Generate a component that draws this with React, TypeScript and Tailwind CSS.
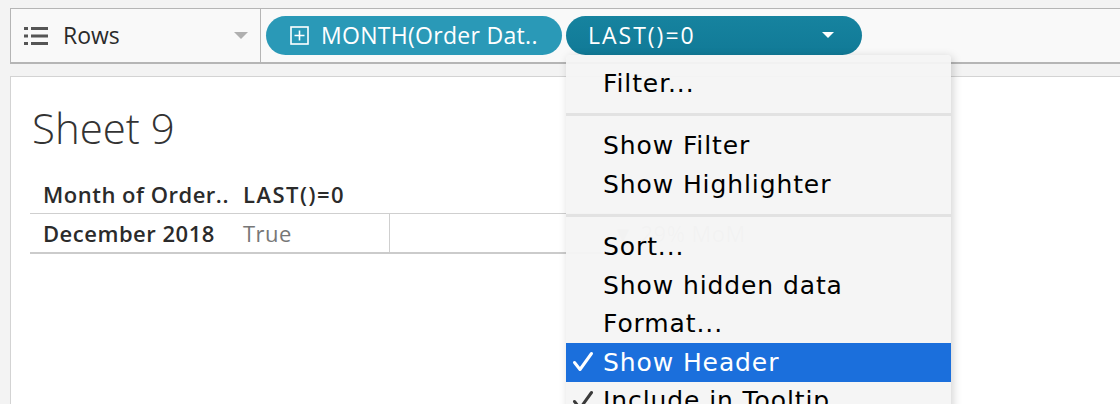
import React from "react";

const Check = ({ color }: { color: string }) => (
  <svg width="22" height="22" viewBox="0 0 22 22" className="absolute left-[6px] top-1/2 -translate-y-1/2">
    <path d="M2.5 11.5 L8 18.5 L19.5 2.5" fill="none" stroke={color} strokeWidth="3" strokeLinecap="round" strokeLinejoin="round" />
  </svg>
);

const MenuItem = ({ label, checked, active }: { label: string; checked?: boolean; active?: boolean }) => (
  <div
    className={`relative h-[38.5px] flex items-center pl-[37px] text-[25px] tracking-[0.9px] ${
      active ? "bg-[#1b6fdc] text-white" : "text-black"
    }`}
  >
    {checked && <Check color={active ? "#ffffff" : "#3a3a3a"} />}
    {label}
  </div>
);

const Sep = () => (
  <div className="h-[24px] flex items-center">
    <div className="h-[3px] w-full bg-[#e2e2e2]" />
  </div>
);

export default function App() {
  return (
    <div className="relative w-[1120px] h-[404px] overflow-hidden bg-[#f3f3f3] font-['Open_Sans',sans-serif]">
      {/* rows shelf */}
      <div className="pt-[8px] pl-[10px]">
        <div className="flex h-[56px] bg-[#f9f9f9] border-t border-l border-b-2 border-[#b5b5b5]">
          <div className="w-[250px] flex items-center pl-[13px] pr-[12px] border-r border-[#b5b5b5]">
            <svg width="26" height="20" viewBox="0 0 26 20" className="mr-[13px]">
              <rect x="0" y="1" width="4" height="3" fill="#555" />
              <rect x="7" y="1" width="17" height="3" fill="#555" />
              <rect x="0" y="8.5" width="4" height="3" fill="#555" />
              <rect x="7" y="8.5" width="17" height="3" fill="#555" />
              <rect x="0" y="16" width="4" height="3" fill="#555" />
              <rect x="7" y="16" width="17" height="3" fill="#555" />
            </svg>
            <span className="text-[23px] text-[#2b2b2b]">Rows</span>
            <svg width="14" height="8" viewBox="0 0 14 8" className="ml-auto">
              <path d="M0 0 L14 0 L7 7 Z" fill="#b0b0b0" />
            </svg>
          </div>
          <div className="flex items-center gap-[4px] pl-[5px]">
            <div className="w-[296px] h-[39px] rounded-full bg-[#2a99b7] flex items-center pl-[24px] text-white text-[23px] tracking-[0.3px] whitespace-nowrap">
              <svg width="19" height="19" viewBox="0 0 19 19" className="mr-[12px] shrink-0">
                <rect x="1" y="1" width="17" height="17" fill="none" stroke="#fff" strokeWidth="1.6" />
                <path d="M9.5 4.5 V14.5 M4.5 9.5 H14.5" stroke="#fff" strokeWidth="1.6" />
              </svg>
              MONTH(Order Dat..
            </div>
            <div className="w-[296px] h-[39px] rounded-full bg-gradient-to-b from-[#16839f] to-[#117a97] flex items-center pl-[22px] pr-[28px] text-white text-[23px]">
              <span className="tracking-[2px]">LAST()=0</span>
              <svg width="12" height="7" viewBox="0 0 12 7" className="ml-auto">
                <path d="M0 0 L12 0 L6 6 Z" fill="#fff" />
              </svg>
            </div>
          </div>
        </div>
      </div>

      {/* sheet panel */}
      <div className="mt-[12px] ml-[10px] h-[400px] bg-white border-t border-l border-[#d3d3d3] pl-[19px] pt-[26px]">
        <div className="pl-[2px] text-[42px] font-light text-[#333] leading-[50px]">Sheet 9</div>
        <div className="mt-[23px] w-[600px] text-[22px] tracking-[0.5px]">
          <div className="flex h-[38px] items-center border-b border-[#cfcfcf] font-semibold text-[#2b2b2b]">
            <div className="w-[203px] shrink-0 pl-[13px] whitespace-nowrap">Month of Order..</div>
            <div className="pl-[10px] tracking-[1.5px]">LAST()=0</div>
          </div>
          <div className="flex h-[40px] items-center border-b-2 border-[#cbcbcb]">
            <div className="w-[203px] shrink-0 pl-[13px] font-semibold text-[#2b2b2b] whitespace-nowrap">December 2018</div>
            <div className="w-[157px] shrink-0 h-full flex items-center pl-[10px] text-[#777] border-r border-[#cfcfcf]">True</div>
            <div className="shrink-0 pl-[222px] text-[22px] text-[#c4c4c4] whitespace-nowrap">▼ 29% MoM</div>
          </div>
        </div>
      </div>

      {/* context menu */}
      <div className="absolute left-[566px] top-[55px] w-[385px] h-[380px] pt-[9px] rounded-t-[4px] bg-[#f4f4f4]/95 shadow-[2px_2px_10px_rgba(0,0,0,0.18)] font-['DejaVu_Sans',sans-serif]">
        <MenuItem label="Filter..." />
        <Sep />
        <MenuItem label="Show Filter" />
        <MenuItem label="Show Highlighter" />
        <Sep />
        <MenuItem label="Sort..." />
        <MenuItem label="Show hidden data" />
        <MenuItem label="Format..." />
        <MenuItem label="Show Header" checked active />
        <MenuItem label="Include in Tooltip" checked />
      </div>
    </div>
  );
}
